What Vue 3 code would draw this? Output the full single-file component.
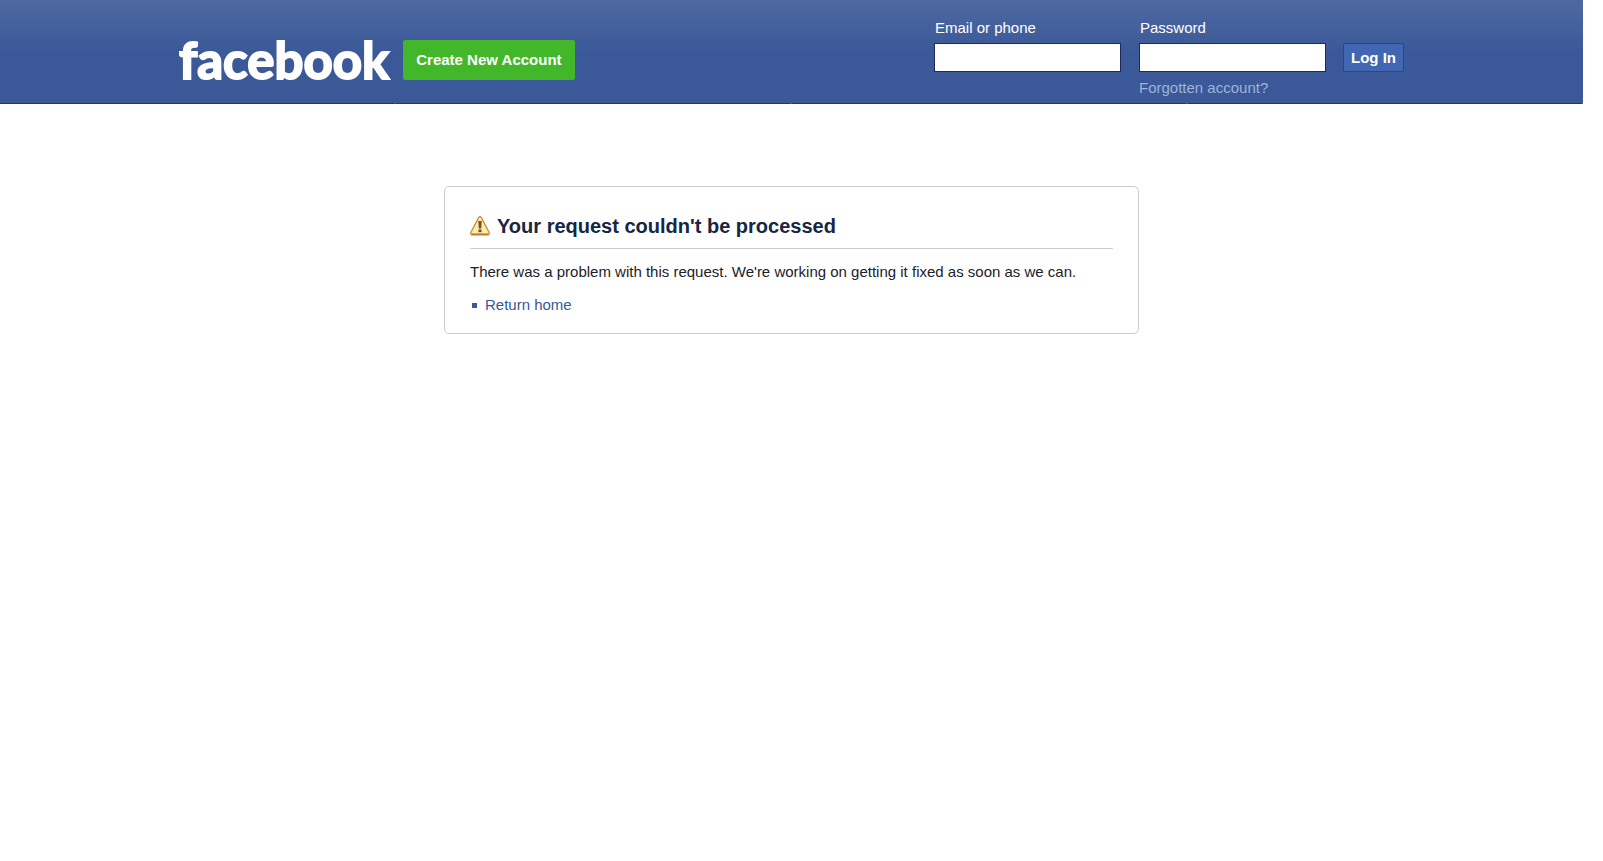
<script setup>
import { ref } from 'vue'

const email = ref('')
const password = ref('')
</script>

<template>
  <div class="page">
    <header class="bar">
      <div class="bar-inner">
        <div class="brand">
          <a class="logo" href="#">facebook</a>
          <button class="signup" type="button">Create New Account</button>
        </div>
        <form class="login" @submit.prevent>
          <div class="field">
            <label for="email">Email or phone</label>
            <input id="email" v-model="email" type="text" />
          </div>
          <div class="field password">
            <label for="pass">Password</label>
            <input id="pass" v-model="password" type="password" />
            <a class="forgot" href="#">Forgotten account?</a>
          </div>
          <button class="submit" type="submit">Log In</button>
        </form>
      </div>
    </header>

    <main class="card">
      <h1>
        <svg class="warn" viewBox="0 0 20 20" aria-hidden="true">
          <path d="M1 19.5h18" stroke="#c9c9c9" stroke-width="1" />
          <path
            d="M8.6 1.6Q10 -.4 11.4 1.6L19 16.3Q19.8 18.4 18 18.4H2Q.2 18.4 1 16.3Z"
            fill="#fdeeb0"
            stroke="#cd9140"
            stroke-width="1.4"
          />
          <path d="M2 18.2h16" stroke="#b97022" stroke-width="1.2" />
          <path d="M8.3 5h3.4l-.5 7.4H8.8Z" fill="#7d4a1d" />
          <rect x="8.4" y="13.6" width="3.2" height="2.6" rx="1" fill="#7d4a1d" />
        </svg>
        Your request couldn't be processed
      </h1>
      <p>There was a problem with this request. We're working on getting it fixed as soon as we can.</p>
      <ul>
        <li><a href="#">Return home</a></li>
      </ul>
    </main>
  </div>
</template>

<style>
body {
  background: #fff;
}
</style>

<style scoped>
.page {
  margin-right: 20px;
  font: 15px/18px "Liberation Sans", Arial, sans-serif;
  color: #1d2129;
}

a {
  text-decoration: none;
}

.bar {
  box-sizing: border-box;
  min-height: 104px;
  background:
    linear-gradient(to right, #1b3580 calc(100% - 1px), #5a73a8 0) left bottom / 25% 1px repeat-x,
    linear-gradient(#4e69a2, #3b5998 52px);
}

.bar-inner {
  display: flex;
  justify-content: space-between;
  align-items: flex-start;
  max-width: 1225px;
  margin: 0 auto;
}

.brand {
  display: flex;
  align-items: center;
  gap: 14px;
  padding-top: 40px;
}

.logo {
  height: 40px;
  font: bold 51px/40px Lato, sans-serif;
  -webkit-text-stroke: 2px #fff;
  color: #fff;
}

.signup {
  height: 40px;
  padding: 0 13px;
  border: 0;
  border-radius: 2px;
  background: #42b72a;
  color: #fff;
  font: bold 15px/18px "Liberation Sans", Arial, sans-serif;
}

.login {
  display: flex;
  align-items: flex-start;
  padding-top: 19px;
}

.field {
  display: flex;
  flex-direction: column;
  margin-right: 18px;
}

.field.password {
  margin-right: 17px;
}

.field label {
  padding-left: 1px;
  margin-bottom: 6px;
  color: #fff;
}

.field input {
  box-sizing: border-box;
  width: 187px;
  height: 29px;
  padding: 4px;
  border: 1px solid #1d2a5b;
  border-radius: 0;
  background: #fff;
  font: inherit;
}

.forgot {
  margin-top: 7px;
  color: #9cb4d8;
}

.submit {
  height: 29px;
  margin-top: 24px;
  padding: 0 7px;
  border: 1px solid #29487d;
  border-radius: 2px;
  background: #4267b2;
  color: #fff;
  font: bold 15px/18px "Liberation Sans", Arial, sans-serif;
}

.card {
  box-sizing: border-box;
  max-width: 695px;
  margin: 82px auto 0;
  padding: 25px;
  padding-bottom: 19px;
  border: 1px solid #ccc;
  border-radius: 5px;
}

h1 {
  display: flex;
  align-items: center;
  gap: 7px;
  margin: 0;
  padding-bottom: 8px;
  border-bottom: 1px solid #ccc;
  font-size: 20px;
  line-height: 28px;
  color: #162643;
}

.warn {
  width: 20px;
  height: 20px;
}

p {
  margin: 14px 0 15px;
}

ul {
  margin: 0;
  padding: 0;
  list-style: none;
}

li {
  display: flex;
  align-items: center;
  gap: 8px;
  padding-left: 2px;
}

li::before {
  content: "";
  width: 5px;
  height: 5px;
  background: #3b5998;
}

li a {
  color: #365899;
}
</style>
